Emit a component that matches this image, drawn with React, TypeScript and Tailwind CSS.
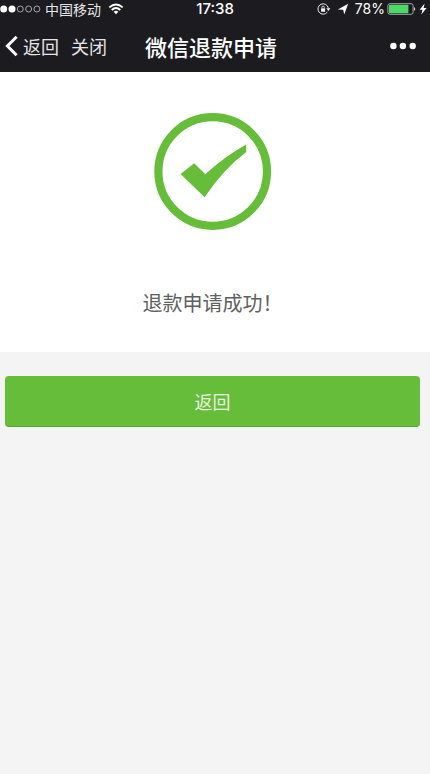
const signal = [true, true, false, false, false];

const StatusBar = () => {
  return (
    <div className="grid h-5 grid-cols-[1fr_auto_1fr] items-center pb-[2px] text-sm leading-4">
      <div className="flex items-center">
        <svg viewBox="0 0 41 10" className="h-[10px] w-[41px]" aria-hidden="true">
          {signal.map((on, i) => (
            <circle
              key={i}
              cx={3.7 + i * 8.3}
              cy="5"
              r={on ? 3.5 : 3}
              fill={on ? "#fff" : "none"}
              stroke={on ? "none" : "#b4b4b8"}
              strokeWidth="0.9"
            />
          ))}
        </svg>
        <span className="ml-1 text-[#e4e4e6]">中国移动</span>
        <svg viewBox="0 0 16 12" className="ml-[7px] h-3 w-4" fill="none" stroke="#fff" strokeWidth="1.9" aria-hidden="true">
          <path d="M1.3 4.4Q8-1.6 14.7 4.4" />
          <path d="M3.7 7Q8 3.2 12.3 7" />
          <path d="M8 11.3L5.6 8.8Q8 6.8 10.4 8.8Z" fill="#fff" stroke="none" />
        </svg>
      </div>
      <time className="font-[Inter,sans-serif] text-[15px] font-medium">17:38</time>
      <div className="flex items-center justify-end pr-[3px]">
        <svg viewBox="0 0 14 12" className="h-3 w-[14px]" fill="none" stroke="#fff" aria-hidden="true">
          <path d="M10.4 9A5.2 5.2 0 1 1 11.3 5.2" strokeWidth="0.9" />
          <path d="M9.4 5.2H13.4L11.4 7.9Z" fill="#fff" stroke="none" />
          <path d="M4.1 5.4H8.1V8.7H4.1Z" fill="#fff" stroke="none" />
          <path d="M4.9 5.5V4.3a1.2 1.2 0 0 1 2.4 0V5.5" strokeWidth="0.8" />
        </svg>
        <svg viewBox="0 0 12 12" className="ml-[6px] h-3 w-3" aria-hidden="true">
          <path d="M11.2 0.8L7.2 11.4L6.2 6.8L0.8 6.6Z" fill="#fff" />
        </svg>
        <span className="ml-[6px] font-[Inter,sans-serif]">78%</span>
        <svg viewBox="0 0 30 12" className="ml-[2px] h-3 w-[30px]" aria-hidden="true">
          <rect x="0.9" y="0.7" width="25.2" height="10.6" rx="2" fill="none" stroke="#a6a6aa" />
          <rect x="2" y="1.7" width="19.4" height="8.6" rx="0.8" fill="#4cd964" />
          <path d="M27.2 4Q29.2 6 27.2 8Z" fill="#fff" />
        </svg>
        <svg viewBox="0 0 8 12" className="ml-[2px] h-3 w-2" aria-hidden="true">
          <path d="M5.6 0.6L0.6 6.8H3.4L2.4 11.4L7.6 5H4.6Z" fill="#fff" />
        </svg>
      </div>
    </div>
  );
};

const NavBar = () => {
  return (
    <nav className="grid h-[52px] grid-cols-[1fr_auto_1fr] items-center pr-3 pl-1">
      <div className="flex items-center gap-3 text-lg text-[#e4e4e6]">
        <button type="button" className="flex items-center gap-[3px]">
          <svg viewBox="0 0 16 22" className="h-[22px] w-4" fill="none" stroke="#fff" strokeWidth="3" aria-hidden="true">
            <path d="M12.6 1.8L3.4 11L12.6 20.2" />
          </svg>
          返回
        </button>
        <button type="button">关闭</button>
      </div>
      <h1 className="text-[22px] font-medium">微信退款申请</h1>
      <button type="button" aria-label="更多" className="justify-self-end">
        <svg viewBox="0 0 28 8" className="h-2 w-7" fill="#fff" aria-hidden="true">
          <circle cx="3.4" cy="4" r="3.2" />
          <circle cx="12.9" cy="4" r="3.2" />
          <circle cx="22.7" cy="4" r="3.2" />
        </svg>
      </button>
    </nav>
  );
};

const App = () => {
  return (
    <div className="min-h-screen bg-[#f4f4f4] font-['Noto_Sans_CJK_SC',sans-serif]">
      <header className="bg-[#1c1b20] text-white">
        <StatusBar />
        <NavBar />
      </header>
      <main>
        <section className="flex flex-col items-center bg-white pt-10 pr-[10px] pb-8 pl-[5px]">
          <svg viewBox="0 0 118 118" className="size-[118px]" aria-hidden="true">
            <circle cx="58.7" cy="59.5" r="54.3" fill="none" stroke="#66bd39" strokeWidth="8.2" />
            <path d="M26.6 62L40.2 51.2L51.3 62.3Q71 44 92.2 32.4V39.9Q68.5 58 50.6 85.3Z" fill="#66bd39" />
          </svg>
          <p className="mt-14 text-xl leading-[34px] text-[#606060]">退款申请成功！</p>
        </section>
        <div className="pt-6 pr-[10px] pl-[5px]">
          <button
            type="button"
            className="h-[51px] w-full rounded border-b border-[#5aa733] bg-[#66bd39] text-lg text-[#e8f5e1]"
          >
            返回
          </button>
        </div>
      </main>
    </div>
  );
};

export default App;
